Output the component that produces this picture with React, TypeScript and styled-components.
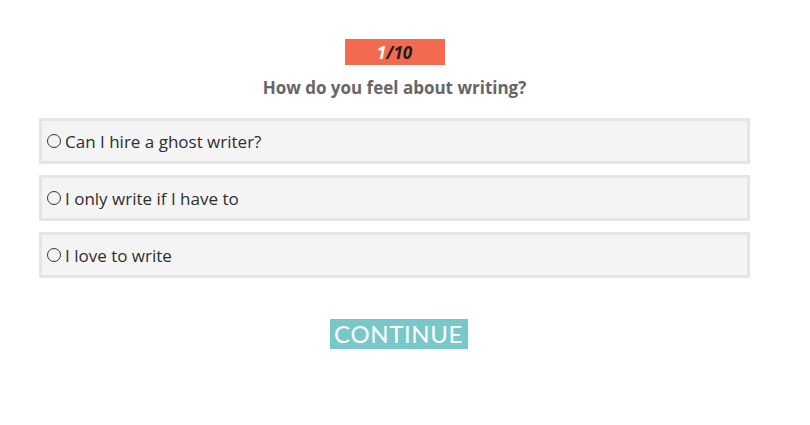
import { useState } from 'react';
import styled, { createGlobalStyle } from 'styled-components';

const GlobalStyle = createGlobalStyle`
  html, body {
    margin: 0;
    padding: 0;
    background: #ffffff;
    font-family: 'Open Sans', 'Liberation Sans', sans-serif;
  }
`;

const Page = styled.main`
  width: 711px;
  margin-left: 39px;
  padding-top: 39px;
  display: flex;
  flex-direction: column;
  align-items: center;
`;

const Counter = styled.div`
  width: 100px;
  height: 26px;
  background: #f46a4e;
  display: flex;
  align-items: center;
  justify-content: center;
  font-size: 17px;
  font-weight: 700;
  font-style: italic;
  color: #1e1e1e;
`;

const Current = styled.span`
  color: #ffffff;
`;

const Question = styled.h2`
  margin: 11px 0 18px;
  font-size: 17px;
  line-height: 24px;
  font-weight: 700;
  color: #666666;
`;

const Options = styled.div`
  align-self: stretch;
  display: flex;
  flex-direction: column;
  gap: 11px;
`;

const Option = styled.label<{ $selected: boolean }>`
  height: 46px;
  box-sizing: border-box;
  border: 3px solid #e5e5e5;
  background: ${(p) => (p.$selected ? '#eaf6f6' : '#f4f4f4')};
  display: flex;
  align-items: center;
  padding-left: 5px;
  gap: 4px;
  font-size: 17px;
  color: #2e2e2e;
  cursor: pointer;
`;

const Radio = styled.span<{ $selected: boolean }>`
  width: 14px;
  height: 14px;
  box-sizing: border-box;
  border: 1.5px solid #333333;
  border-radius: 50%;
  background: ${(p) => (p.$selected ? '#333333' : 'transparent')};
`;

const ContinueButton = styled.button`
  margin-top: 41px;
  margin-left: 8px;
  width: 138px;
  height: 30px;
  border: none;
  padding: 0;
  background: #79c8c9;
  color: #ffffff;
  font-family: Lato, 'DejaVu Sans', sans-serif;
  font-size: 24px;
  letter-spacing: 0.6px;
  line-height: 30px;
  cursor: pointer;
`;

const answers = ['Can I hire a ghost writer?', 'I only write if I have to', 'I love to write'];

export default function App() {
  const [selected, setSelected] = useState<number | null>(null);
  return (
    <>
      <GlobalStyle />
      <Page>
        <Counter>
          <Current>1</Current>/10
        </Counter>
        <Question>How do you feel about writing?</Question>
        <Options>
          {answers.map((text, i) => (
            <Option key={text} $selected={selected === i} onClick={() => setSelected(i)}>
              <Radio $selected={selected === i} />
              {text}
            </Option>
          ))}
        </Options>
        <ContinueButton>CONTINUE</ContinueButton>
      </Page>
    </>
  );
}
